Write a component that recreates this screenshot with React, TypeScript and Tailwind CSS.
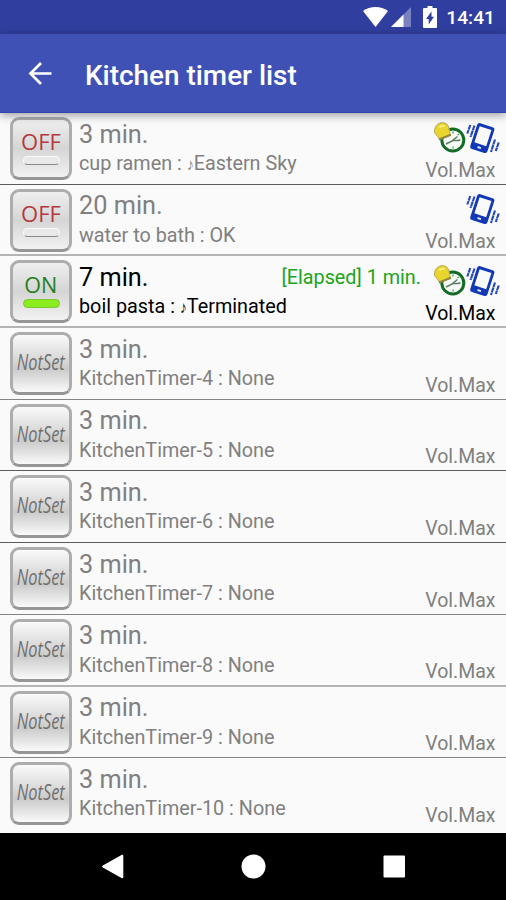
import clsx from "clsx";

type TimerState = "off" | "on" | "notset";

interface Timer {
  time: string;
  label: string;
  melody?: string;
  state: TimerState;
  rule: string;
  alarm?: boolean;
  vibrate?: boolean;
  elapsed?: string;
}

const DARK = "border-b border-[#5c5c5c]";
const MID = "border-b border-[#858585]";
const SOFT = "border-b-2 border-[#b4b4b4]";

const timers: Timer[] = [
  { time: "3 min.", label: "cup ramen : ", melody: "Eastern Sky", state: "off", rule: DARK, alarm: true, vibrate: true },
  { time: "20 min.", label: "water to bath : OK", state: "off", rule: SOFT, vibrate: true },
  { time: "7 min.", label: "boil pasta : ", melody: "Terminated", state: "on", rule: SOFT, alarm: true, vibrate: true, elapsed: "[Elapsed] 1 min." },
  { time: "3 min.", label: "KitchenTimer-4 : None", state: "notset", rule: MID },
  { time: "3 min.", label: "KitchenTimer-5 : None", state: "notset", rule: DARK },
  { time: "3 min.", label: "KitchenTimer-6 : None", state: "notset", rule: DARK },
  { time: "3 min.", label: "KitchenTimer-7 : None", state: "notset", rule: MID },
  { time: "3 min.", label: "KitchenTimer-8 : None", state: "notset", rule: SOFT },
  { time: "3 min.", label: "KitchenTimer-9 : None", state: "notset", rule: MID },
  { time: "3 min.", label: "KitchenTimer-10 : None", state: "notset", rule: "" },
];

function StatusBar() {
  return (
    <div className="flex h-[34px] shrink-0 items-center justify-end bg-[#303f9f] pr-[11px] text-white">
      <svg className="mr-[3px] h-5 w-[25px]" viewBox="0 0 25 20" fill="currentColor">
        <path d="M12.5 20 0 4C7-1.2 18-1.2 25 4Z" />
      </svg>
      <svg className="h-5 w-5" viewBox="0 0 20 20" fill="currentColor">
        <path d="M20 0v20H0Z" opacity="0.35" />
        <path d="M12.5 7.5V20H0Z" />
      </svg>
      <svg className="ml-[12px] h-[22px] w-[14px]" viewBox="0 0 14 22">
        <path d="M4.5 0h5v2H13a1 1 0 0 1 1 1v18a1 1 0 0 1-1 1H1a1 1 0 0 1-1-1V3a1 1 0 0 1 1-1h3.500Z" fill="#fff" />
        <path d="M8.500 5.500v5.200h2.500L5.700 18.500v-5.400H3Z" fill="#303f9f" />
      </svg>
      <span className="mt-[2px] ml-[9px] text-[19.2px] leading-none font-medium">14:41</span>
    </div>
  );
}

function AppBar() {
  return (
    <header className="relative z-10 flex h-[79px] shrink-0 items-center border-b border-[#2c46b4] bg-[#3f51b5] text-white shadow-[0_2px_9px_rgba(0,0,0,0.4)]">
      <svg className="ml-[28px] h-6 w-6" viewBox="0 0 24 24" fill="none" stroke="currentColor" strokeWidth="2.700">
        <path d="M23.500 12.500H3M13 2 2.500 12.500 13 23" />
      </svg>
      <h1 className="mt-[5px] ml-[33px] text-[27.900px] leading-none font-medium">Kitchen timer list</h1>
    </header>
  );
}

function StateButton({ state }: { state: TimerState }) {
  return (
    <button
      className={clsx(
        "flex h-[63px] w-[62px] shrink-0 flex-col items-center rounded-[9px] border-[3px] border-[#adadad] border-b-[#969696] font-['Open_Sans','Noto_Sans',sans-serif]",
        state === "notset"
          ? "bg-linear-to-b from-[#fafafa] via-[#cbcbcb] via-60% to-[#fafafa]"
          : "bg-linear-to-b from-[#efefef] via-[#d5d5d5] via-50% to-[#f2f2f2]",
      )}
    >
      {state === "notset" ? (
        <span className="mt-[15px] scale-x-[0.78] text-[21px] leading-[24px] whitespace-nowrap text-[#707070] italic">
          NotSet
        </span>
      ) : (
        <>
          <span
            className={clsx(
              "mt-[9px] text-[22px] leading-[24px]",
              state === "on" ? "scale-x-[0.98] text-[#25801c]" : "text-[#b5383c]",
            )}
          >
            {state === "on" ? "ON" : "OFF"}
          </span>
          <span
            className={clsx(
              "mt-[3px] h-[9px] w-[37px] rounded-full border",
              state === "on" ? "border-[#7cc832] bg-[#8bec20]" : "border-[#fafafa] border-b-[#888] bg-[#e8e8e8]",
            )}
          />
        </>
      )}
    </button>
  );
}

function AlarmIcon() {
  return (
    <svg className="h-[32px] w-[32px]" viewBox="0 0 32 32" fill="none">
      <circle cx="18.800" cy="18" r="11" fill="#f7fbf7" stroke="#146b26" strokeWidth="3" />
      <path d="M19 9.500v2M26.500 18h-2M19 26.500v-2M25 12l-1.500 1" stroke="#4b9a58" strokeWidth="1.300" />
      <path d="m12 22 7-3.500h6.500M18.500 18.500l5-4" stroke="#5d8064" strokeWidth="1.600" />
      <path d="M1.500 5C3.500 .5 10-.8 13.300 2.600c2.400 2.800 1.500 5.900 3 9.900L5.500 17.400C4.500 15.500 3.500 14 2 12.500 0 10.800 0 8 1.500 5Z" fill="#ead52f" stroke="#b0a660" strokeWidth="1" />
      <path d="M5 17.500 17 12.700" stroke="#8f873e" strokeWidth="2" />
      <path d="M5.500 5.500c1.500-1.800 3.500-2 5-1" stroke="#fff27a" strokeWidth="2" />
    </svg>
  );
}

function VibrateIcon() {
  return (
    <svg className="h-[34px] w-[34px]" viewBox="0 0 34 34" fill="none">
      <g transform="rotate(18 16 18)">
        <rect x="7" y="3.500" width="18" height="27" rx="2.500" fill="#1238b4" />
        <rect x="9.800" y="6.500" width="12.400" height="17" fill="#fafafa" />
        <rect x="14" y="26" width="4" height="2" rx="1" fill="#dfe6ff" />
      </g>
      <path d="M4.300 4 1.300 12.500M8.500 4.500 4.500 16M29 18.500 25 31M32.700 21.500l-2.900 8.500" stroke="#2448b8" strokeWidth="2.100" strokeDasharray="5 .4" />
    </svg>
  );
}

function TimerRow({ timer }: { timer: Timer }) {
  const active = timer.state === "on";
  return (
    <li className={clsx("flex h-[71.7px] px-[10px] pt-[4px]", timer.rule, active ? "text-black" : "text-[#808080]")}>
      <StateButton state={timer.state} />
      <div className="flex min-w-0 flex-1 flex-col pl-[7px] whitespace-nowrap">
        <span className="mt-[3.500px] text-[25.300px] leading-[28px]">{timer.time}</span>
        <span className="mt-[3.500px] text-[19.800px] leading-[24px]">
          {timer.label}
          {timer.melody && (
            <>
              <span className="-mr-[1px] inline-block w-[8px] origin-left scale-x-[0.8] text-[17px]">♪</span>
              {timer.melody}
            </>
          )}
        </span>
      </div>
      {timer.elapsed && (
        <span className="mt-[6px] mr-[5px] text-[19.800px] leading-[24px] whitespace-nowrap text-[#1ba51b]">
          {timer.elapsed}
        </span>
      )}
      <div className="flex w-[70px] shrink-0 flex-col items-end">
        <div className="-mr-[4px] flex h-[41.500px] shrink-0 items-center">
          {timer.alarm && <AlarmIcon />}
          {timer.vibrate && <VibrateIcon />}
        </div>
        <span className="mr-[0.500px] text-[19.500px] leading-[24px]">Vol.Max</span>
      </div>
    </li>
  );
}

function NavBar() {
  return (
    <nav className="flex h-[67px] shrink-0 items-center bg-black text-white">
      <svg className="h-[67px] w-full" viewBox="0 0 506 67" fill="currentColor">
        <path d="M102.800 32.500 121.500 22c.9-.5 1.800 0 1.800 1v21c0 1-.9 1.500-1.800 1l-18.700-10.500c-1-.6-1-1.400 0-2Z" />
        <circle cx="253.500" cy="33.500" r="12" />
        <rect x="383.500" y="22.500" width="21.500" height="22" rx="1" />
      </svg>
    </nav>
  );
}

export default function App() {
  return (
    <div className="flex h-[900px] w-[506px] flex-col overflow-hidden bg-[#fafafa] font-[Roboto,'Noto_Sans',sans-serif]">
      <StatusBar />
      <AppBar />
      <ul className="h-[720px] shrink-0">
        {timers.map((timer) => (
          <TimerRow key={timer.label} timer={timer} />
        ))}
      </ul>
      <NavBar />
    </div>
  );
}
